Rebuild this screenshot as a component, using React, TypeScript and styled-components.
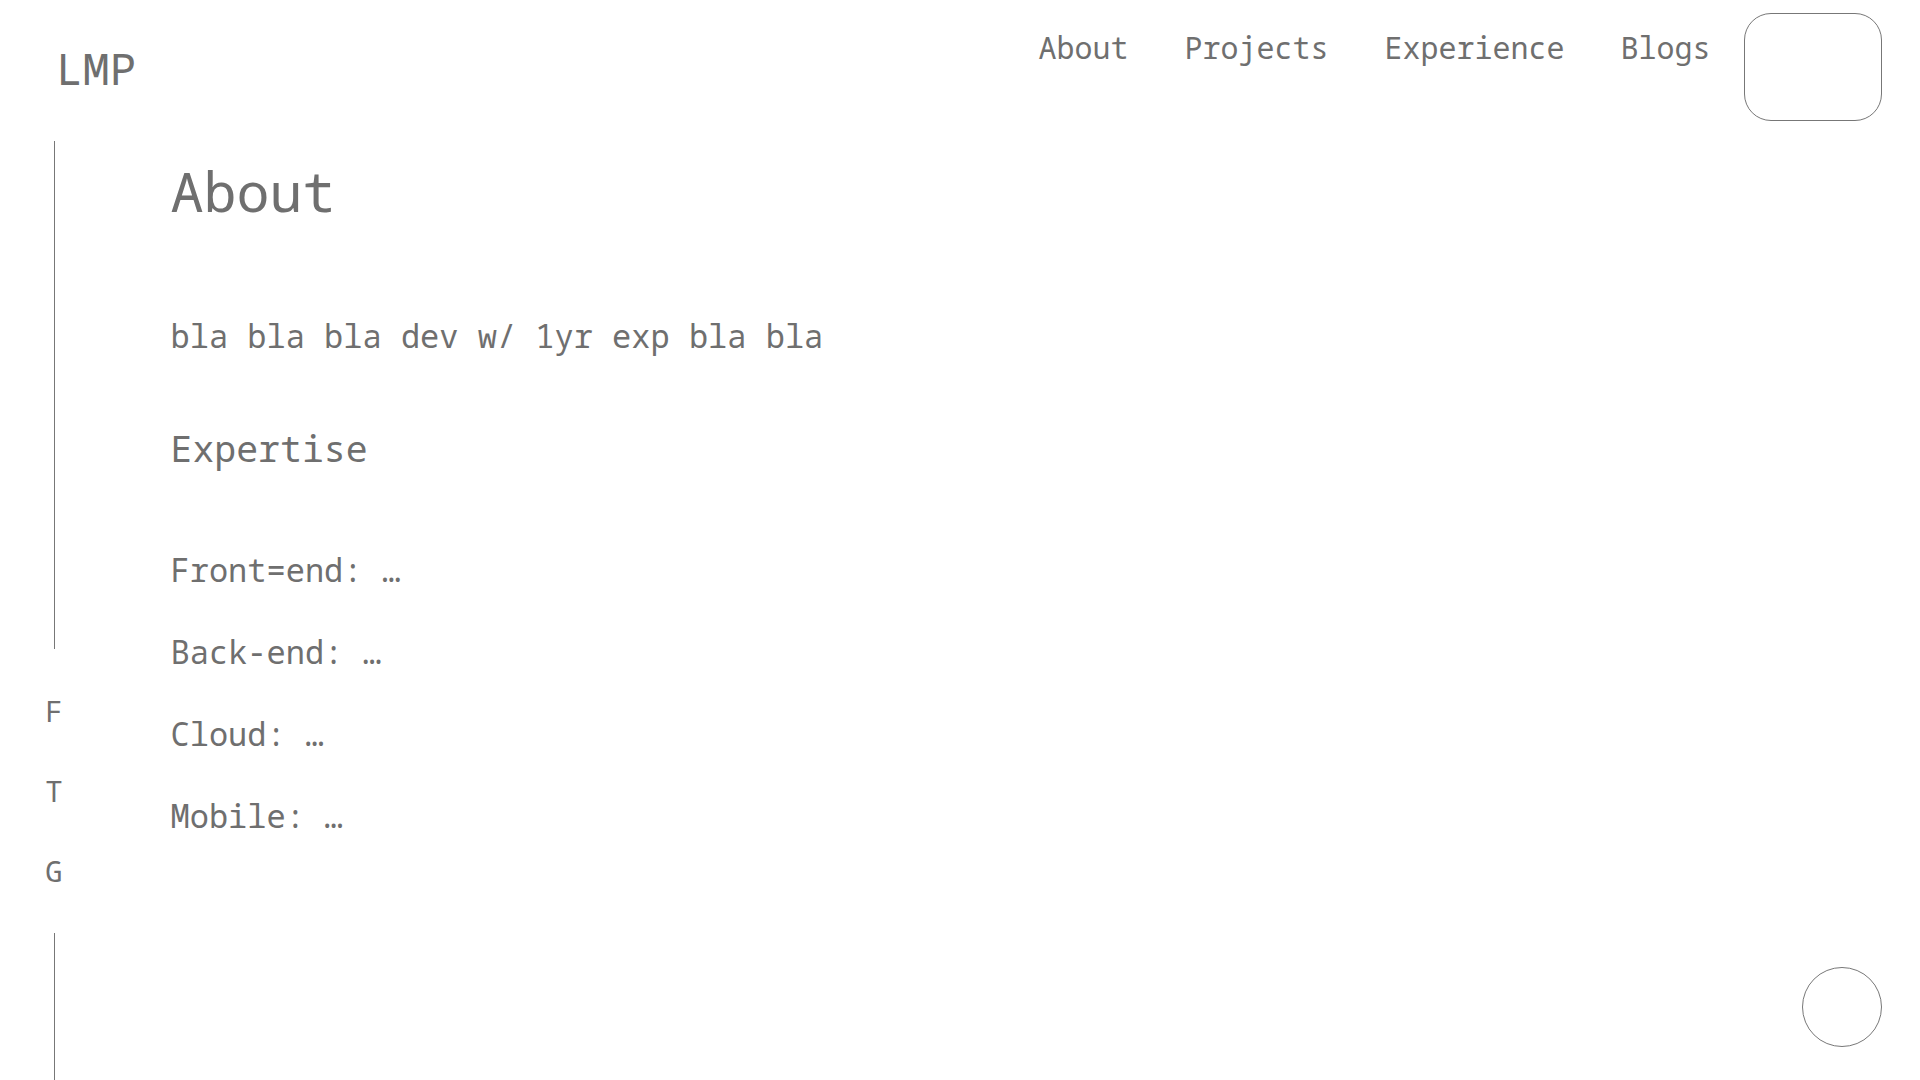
import React from "react";
import styled, { createGlobalStyle } from "styled-components";

const Global = createGlobalStyle`
  html, body { margin: 0; padding: 0; background: #ffffff; }
  body { font-family: "Noto Sans Mono", "DejaVu Sans Mono", monospace; color: #6f6f6f; }
  * { box-sizing: border-box; }
`;

const Page = styled.div`
  display: flex;
  flex-direction: column;
  height: 100vh;
  overflow: hidden;
`;

const Header = styled.header`
  display: flex;
  align-items: flex-start;
  height: 141px;
  padding: 13px 38px 0 56px;
`;

const Logo = styled.div`
  font-size: 44.5px;
  line-height: 1;
  margin-top: 33px;
`;

const Nav = styled.nav`
  display: flex;
  gap: 56px;
  margin-left: auto;
  margin-top: 20px;
`;

const NavLink = styled.a`
  font-size: 30px;
  line-height: 1;
  color: #6f6f6f;
  text-decoration: none;
`;

const MenuButton = styled.button`
  width: 138px;
  height: 108px;
  margin-left: 33.5px;
  border: 1px solid #777;
  border-radius: 27px;
  background: #fff;
  padding: 0;
`;

const Body = styled.div`
  display: flex;
  flex: 1;
  min-height: 0;
`;

const Sidebar = styled.aside`
  display: flex;
  flex-direction: column;
  align-items: center;
  width: 108px;
`;

const Rule = styled.div<{ $h?: number }>`
  width: 1px;
  background: #777;
  height: ${(p) => (p.$h ? `${p.$h}px` : "auto")};
  flex: ${(p) => (p.$h ? "none" : "1")};
`;

const Socials = styled.ul`
  list-style: none;
  margin: 22px 0 22px;
  padding: 0;
`;

const Social = styled.li`
  font-size: 29px;
  line-height: 80px;
  height: 80px;
  text-align: center;
`;

const Main = styled.main`
  flex: 1;
  padding-left: 62.5px;
`;

const Title = styled.h1`
  font-size: 55px;
  font-weight: 400;
  line-height: 1;
  margin: 21.5px 0 0;
`;

const Intro = styled.p`
  font-size: 32px;
  line-height: 1;
  margin: 102px 0 0;
`;

const SubTitle = styled.h2`
  font-size: 36.5px;
  font-weight: 400;
  line-height: 1;
  margin: 78px 0 0;
`;

const List = styled.ul`
  list-style: none;
  padding: 0;
  margin: 88px 0 0;
  display: flex;
  flex-direction: column;
  gap: 50px;
`;

const Item = styled.li`
  font-size: 32px;
  line-height: 1;
`;

const Circle = styled.button`
  position: fixed;
  right: 38px;
  bottom: 33px;
  width: 80px;
  height: 80px;
  border-radius: 50%;
  border: 1px solid #777;
  background: #fff;
  padding: 0;
`;

export default function App() {
  return (
    <Page>
      <Global />
      <Header>
        <Logo>LMP</Logo>
        <Nav>
          <NavLink href="#about">About</NavLink>
          <NavLink href="#projects">Projects</NavLink>
          <NavLink href="#experience">Experience</NavLink>
          <NavLink href="#blogs">Blogs</NavLink>
        </Nav>
        <MenuButton aria-label="menu" />
      </Header>
      <Body>
        <Sidebar>
          <Rule $h={508} />
          <Socials>
            <Social>F</Social>
            <Social>T</Social>
            <Social>G</Social>
          </Socials>
          <Rule />
        </Sidebar>
        <Main>
          <Title>About</Title>
          <Intro>bla bla bla dev w/ 1yr exp bla bla</Intro>
          <SubTitle>Expertise</SubTitle>
          <List>
            <Item>Front=end: …</Item>
            <Item>Back-end: …</Item>
            <Item>Cloud: …</Item>
            <Item>Mobile: …</Item>
          </List>
        </Main>
      </Body>
      <Circle aria-label="scroll" />
    </Page>
  );
}
